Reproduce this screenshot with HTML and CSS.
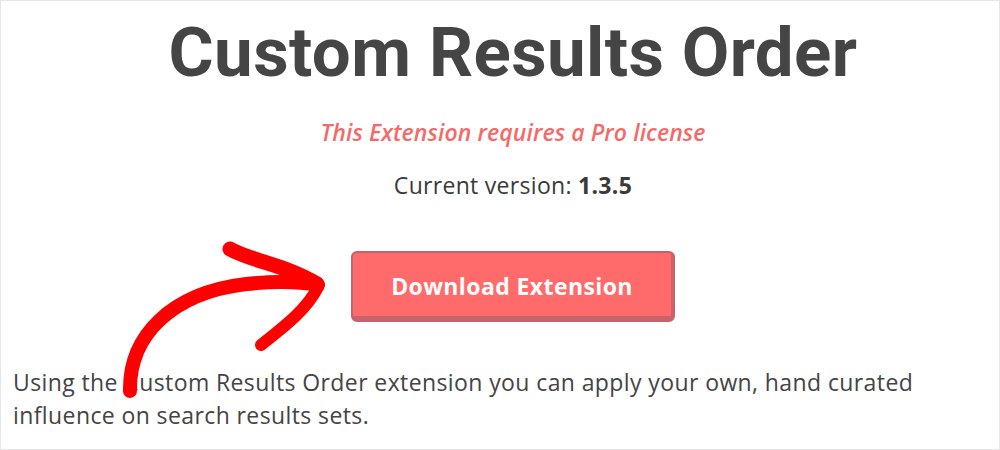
FILE: index.html
```html
<!DOCTYPE html>
<html lang="en">

<head>
  <meta charset="UTF-8">
  <meta name="viewport" content="width=device-width, initial-scale=1.0">
  <title>Custom Results Order</title>
  <link rel="stylesheet" href="styles.css">
</head>

<body>
  <main class="page">
    <section class="intro">
      <h1 class="intro__title">Custom Results Order</h1>
      <p class="intro__notice">This Extension requires a Pro license</p>
      <p class="intro__version">Current version: <strong>1.3.5</strong></p>
      <a class="intro__button" href="#">Download Extension</a>
    </section>

    <p class="page__text">
      Using the Custom Results Order extension you can apply your own, hand curated
      influence on search results sets.
    </p>

    <!-- hand drawn arrow pointing at the button -->
    <svg class="arrow" viewBox="0 0 230 180" width="230" height="180" aria-hidden="true">
      <g fill="none" stroke="#ff0000" stroke-linecap="round" stroke-linejoin="round">
        <path d="M29 160 C28 105, 70 62, 145 53 C175 50, 200 51, 217 54" stroke-width="14" />
        <path d="M129 18 C150 30, 185 34, 216 53" stroke-width="15" />
        <path d="M217 56 C205 80, 180 98, 160 114" stroke-width="12" />
      </g>
    </svg>
  </main>
</body>

</html>
```

FILE: styles.css
```css
html,
body {
  margin: 0;
  height: 100%;
}

body {
  background: #fff;
  font-family: "Open Sans", sans-serif;
  color: #444;
}

.page {
  position: relative;
  box-sizing: border-box;
  height: 450px;
  padding: 0 0 0 12px;
  border: 1px solid #e6e6e6;
  overflow: hidden;
}

.intro {
  display: flex;
  flex-direction: column;
  align-items: center;
  padding-left: 14px;
}

.intro__title {
  margin: 17px 0 0;
  font-family: Roboto, sans-serif;
  font-weight: 700;
  font-size: 69px;
  line-height: 1;
  letter-spacing: .4px;
  color: #454545;
}

.intro__notice {
  margin: 30px 0 0;
  font-size: 23px;
  line-height: 30px;
  font-style: italic;
  font-weight: 600;
  letter-spacing: .1px;
  color: #f46a6a;
}

.intro__version {
  margin: 23px 0 0;
  font-size: 23px;
  line-height: 30px;
  letter-spacing: .3px;
  color: #3a3a3a;
}

.intro__version strong {
  font-weight: 700;
}

.intro__button {
  box-sizing: border-box;
  display: flex;
  align-items: center;
  justify-content: center;
  width: 324px;
  height: 71px;
  margin-top: 51px;
  padding-top: 2px;
  background: #ff6a6a;
  border: 2px solid #c6636b;
  border-right-width: 4px;
  border-bottom-width: 6px;
  border-radius: 6px;
  color: #fff;
  font-size: 23px;
  font-weight: 700;
  letter-spacing: .4px;
  text-decoration: none;
}

.page__text {
  max-width: 940px;
  margin: 44px 0 0;
  font-size: 23px;
  line-height: 33px;
  letter-spacing: .4px;
  color: #444;
}

.arrow {
  position: absolute;
  left: 100px;
  top: 230px;
}
```
